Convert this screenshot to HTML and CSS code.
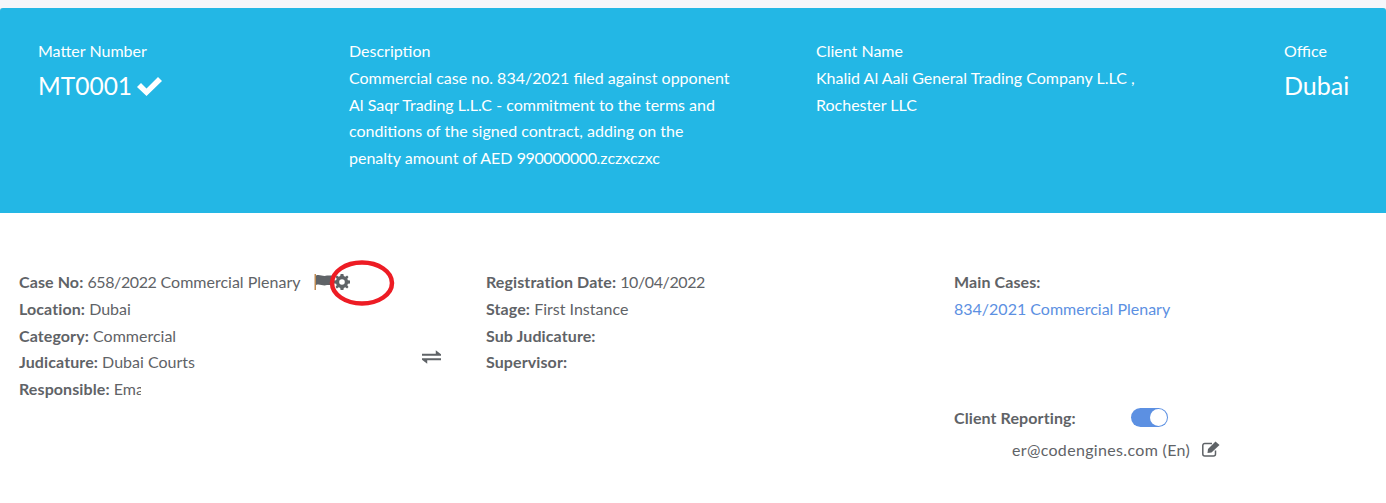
FILE: index.html
```html
<!DOCTYPE html>
<html lang="en">
<head>
    <meta charset="UTF-8">
    <meta name="viewport" content="width=device-width, initial-scale=1.0">
    <title>Matter Details</title>
    <link rel="stylesheet" href="styles.css">
</head>
<body>
    <!-- Matter banner -->
    <div class="banner">
        <div class="banner-col col-matter">
            <div class="banner-label">Matter Number</div>
            <div class="banner-value matter-value">MT0001<svg class="check-icon" viewBox="0 0 25 19" aria-hidden="true"><path d="M0 10 L4 6 L9.5 11.5 L21 0 L25 4 L9.5 19 Z" fill="#fff"/></svg></div>
        </div>
        <div class="banner-col col-description">
            <div class="banner-label">Description</div>
            <div class="banner-text">Commercial case no. 834/2021 filed against opponent<br>Al Saqr Trading L.L.C - commitment to the terms and<br>conditions of the signed contract, adding on the<br>penalty amount of AED <span class="num">990000000</span>.zczxczxc</div>
        </div>
        <div class="banner-col col-client">
            <div class="banner-label">Client Name</div>
            <div class="banner-text">Khalid Al Aali General Trading Company L.LC ,<br>Rochester LLC</div>
        </div>
        <div class="banner-col col-office">
            <div class="banner-label">Office</div>
            <div class="banner-value">Dubai</div>
        </div>
    </div>

    <!-- Case details -->
    <div class="details">
        <div class="details-col">
            <div class="line"><b>Case No:</b> <span class="num">658/2022</span> Commercial Plenary
                <svg class="flag-icon" viewBox="0 0 18 16" aria-hidden="true"><path d="M0.5 0 H2 V16 H0.5 Z" fill="#c08a50"/><path d="M2 1.5 C6 0 9 3 13 1.5 L18 1.5 V11 L13 11 C9 12.5 6 9.5 2 11 Z" fill="#5f6367"/></svg><svg class="gear-icon" viewBox="0 0 16 16" aria-hidden="true"><path fill-rule="evenodd" d="M6.6 0 H9.4 L9.8 2.1 L11.3 2.7 L13.1 1.5 L14.5 2.9 L13.3 4.7 L13.9 6.2 L16 6.6 V9.4 L13.9 9.8 L13.3 11.3 L14.5 13.1 L13.1 14.5 L11.3 13.3 L9.8 13.9 L9.4 16 H6.6 L6.2 13.9 L4.7 13.3 L2.9 14.5 L1.5 13.1 L2.7 11.3 L2.1 9.8 L0 9.4 V6.6 L2.1 6.2 L2.7 4.7 L1.5 2.9 L2.9 1.5 L4.7 2.7 L6.2 2.1 Z M8 5.2 A2.8 2.8 0 1 0 8 10.8 A2.8 2.8 0 1 0 8 5.2 Z" fill="#5f6367"/></svg>
            </div>
            <div class="line"><b>Location:</b> Dubai</div>
            <div class="line"><b>Category:</b> Commercial</div>
            <div class="line"><b>Judicature:</b> Dubai Courts</div>
            <div class="line line-clipped"><b>Responsible:</b> Emad Saleh</div>
            <svg class="swap-icon" viewBox="0 0 20 14" aria-hidden="true"><path d="M0 3.5 H14.5 V0 L20 4 V5.8 H0 Z M20 8.2 V10.5 H5.5 V14 L0 10 V8.2 Z" fill="#5f6367"/></svg>
        </div>
        <div class="details-col">
            <div class="line"><b>Registration Date:</b> <span class="num">10/04/2022</span></div>
            <div class="line"><b>Stage:</b> First Instance</div>
            <div class="line"><b>Sub Judicature:</b></div>
            <div class="line"><b>Supervisor:</b></div>
        </div>
        <div class="details-col">
            <div class="line"><b>Main Cases:</b></div>
            <div class="line"><a class="case-link" href="#">834/2021 Commercial Plenary</a></div>
            <div class="reporting">
                <b class="reporting-label">Client Reporting:</b>
                <span class="toggle"><span class="toggle-knob"></span></span>
            </div>
            <div class="reporting-email"><span class="email-text">er@codengines.com (En)</span>
                <svg class="edit-icon" viewBox="0 0 18 16" aria-hidden="true"><path d="M13.5 9.5 V13 A2 2 0 0 1 11.5 15 H2.8 A2 2 0 0 1 0.8 13 V4.5 A2 2 0 0 1 2.8 2.5 H10" fill="none" stroke="#5f6367" stroke-width="1.5"/><path d="M6 8 L13.5 0.5 L17.5 4 L9.5 11.5 L5.5 12 Z" fill="#5f6367"/></svg>
            </div>
        </div>
    </div>

    <!-- Red annotation drawn over the screenshot -->
    <svg class="annotation" viewBox="0 0 66 46" aria-hidden="true"><ellipse cx="33" cy="23" rx="30" ry="20.5" fill="none" stroke="#ed1c24" stroke-width="4.5"/></svg>
</body>
</html>
```

FILE: styles.css
```css
body {
    font-family: Lato, Arial, sans-serif;
    font-size: 16px;
    line-height: 26.6px;
    margin: 0;
    padding-top: 8px;
    background-color: #fff;
    color: #5f6367;
    position: relative;
    overflow: hidden;
}
body::before {
    content: "";
    position: absolute;
    top: 0;
    left: 0;
    right: 0;
    height: 8px;
    background-color: #f5f6fa;
}
.banner {
    display: flex;
    height: 205px;
    box-sizing: border-box;
    padding: 30.4px 0 0 38px;
    background-color: #23b7e5;
    border-radius: 3px 3px 0 0;
    box-shadow: 0 -1px 0 #dde1e7;
    color: #fff;
}
.col-matter {
    width: 311px;
}
.col-description {
    width: 467px;
}
.col-client {
    width: 468px;
}
.banner-value {
    font-size: 25px;
    line-height: 36px;
    margin-top: 2px;
}
.matter-value {
    font-size: 24.5px;
    margin-top: 3px;
}
.check-icon {
    width: 25px;
    height: 19px;
    margin-left: 5px;
    vertical-align: -1px;
}
.num {
    letter-spacing: -0.4px;
}
.details {
    display: grid;
    grid-template-columns: 467px 468px 1fr;
    padding: 56.4px 0 0 19px;
}
.details-col {
    position: relative;
}
.line {
    height: 26.6px;
    white-space: nowrap;
}
.line-clipped {
    width: 122px;
    overflow: hidden;
}
b {
    font-weight: 700;
    letter-spacing: 0.1px;
}
.flag-icon {
    width: 18px;
    height: 16px;
    margin-left: 10px;
    vertical-align: -2px;
}
.gear-icon {
    width: 16px;
    height: 16px;
    margin-left: 2px;
    vertical-align: -2px;
}
.swap-icon {
    position: absolute;
    left: 403px;
    top: 81px;
    width: 19px;
    height: 14px;
}
.case-link {
    color: #5c90e2;
    text-decoration: none;
}
.reporting {
    display: flex;
    align-items: center;
    margin-top: 82px;
}
.reporting-label {
    width: 177px;
}
.toggle {
    width: 37px;
    height: 19px;
    border-radius: 10px;
    background-color: #5c90e2;
    position: relative;
}
.toggle-knob {
    position: absolute;
    right: 1px;
    top: 1px;
    width: 17px;
    height: 17px;
    border-radius: 50%;
    background-color: #fff;
}
.reporting-email {
    margin: 6px 0 0 58px;
}
.email-text {
    letter-spacing: 0.33px;
}
.edit-icon {
    width: 18px;
    height: 16px;
    margin-left: 8px;
    vertical-align: -1px;
}
.annotation {
    position: absolute;
    left: 329px;
    top: 260px;
    width: 66px;
    height: 46px;
}
```
